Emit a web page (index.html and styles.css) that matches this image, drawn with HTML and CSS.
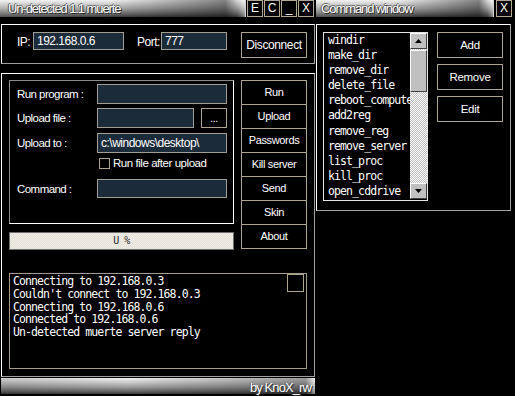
FILE: index.html
```html
<!DOCTYPE html>
<html>
<head>
<meta charset="utf-8">
<title>Un-detected 1.1 muerte</title>
<link rel="stylesheet" href="styles.css">
</head>
<body>
<div class="desk">
  <div class="win main">
    <div class="titlerow">
      <div class="titlebar main-title"><span class="ttext">Un-detected 1.1 muerte</span></div>
      <div class="tbtn">E</div>
      <div class="tbtn">C</div>
      <div class="tbtn">_</div>
      <div class="tbtn">X</div>
    </div>

    <div class="panel conn">
      <span class="lbl ip-lbl">IP:</span>
      <div class="field ip-field">192.168.0.6</div>
      <span class="lbl port-lbl">Port:</span>
      <div class="field port-field">777</div>
      <div class="btn disc">Disconnect</div>
    </div>

    <div class="panel body">
      <div class="top">
        <div class="leftcol">
          <div class="form">
            <div class="row r1">
              <span class="flabel">Run program :</span>
              <div class="field wide"></div>
            </div>
            <div class="row r2">
              <span class="flabel">Upload file :</span>
              <div class="field short"></div>
              <div class="btn dots">...</div>
            </div>
            <div class="row r3">
              <span class="flabel">Upload to :</span>
              <div class="field wide">c:\windows\desktop\</div>
            </div>
            <div class="row chkrow">
              <span class="chk"></span>
              <span class="chklabel">Run file after upload</span>
            </div>
            <div class="row r5">
              <span class="flabel">Command :</span>
              <div class="field wide cmdfield"></div>
            </div>
          </div>
          <div class="progress">U %</div>
        </div>
        <div class="actions">
          <div class="abtn">Run</div>
          <div class="abtn">Upload</div>
          <div class="abtn">Passwords</div>
          <div class="abtn">Kill server</div>
          <div class="abtn">Send</div>
          <div class="abtn">Skin</div>
          <div class="abtn">About</div>
        </div>
      </div>
      <div class="log">
        <div class="logline">Connecting to 192.168.0.3</div>
        <div class="logline">Couldn't connect to 192.168.0.3</div>
        <div class="logline">Connecting to 192.168.0.6</div>
        <div class="logline">Connected to 192.168.0.6</div>
        <div class="logline">Un-detected muerte server reply</div>
        <div class="logbox"></div>
      </div>
    </div>

    <div class="footer"><span class="ftext">by KnoX_rw</span></div>
  </div>

  <div class="win cmd">
    <div class="titlerow">
      <div class="titlebar cmd-title"><span class="ttext">Command window</span></div>
      <div class="tbtn cmdx">X</div>
    </div>
    <div class="panel cmdpanel">
      <div class="listbox">
        <div class="items">
          <div class="item">windir</div>
          <div class="item">make_dir</div>
          <div class="item">remove_dir</div>
          <div class="item">delete_file</div>
          <div class="item">reboot_computer</div>
          <div class="item">add2reg</div>
          <div class="item">remove_reg</div>
          <div class="item">remove_server</div>
          <div class="item">list_proc</div>
          <div class="item">kill_proc</div>
          <div class="item">open_cddrive</div>
        </div>
        <div class="scrollbar">
          <div class="sbtn up"><svg width="7" height="4" viewBox="0 0 7 4"><polygon points="3.5,0 7,4 0,4" fill="#000"/></svg></div>
          <div class="track"><div class="thumb"></div></div>
          <div class="sbtn down"><svg width="7" height="4" viewBox="0 0 7 4"><polygon points="0,0 7,0 3.5,4" fill="#000"/></svg></div>
        </div>
      </div>
      <div class="cmdbtns">
        <div class="btn cbtn">Add</div>
        <div class="btn cbtn">Remove</div>
        <div class="btn cbtn">Edit</div>
      </div>
    </div>
  </div>
</div>
</body>
</html>
```

FILE: styles.css
```css
* { box-sizing: border-box; }

html, body {
  margin: 0;
  padding: 0;
  background: #000;
}

body {
  width: 515px;
  height: 396px;
  overflow: hidden;
  font-family: "Liberation Sans", Arial, sans-serif;
  color: #fff;
}

.desk {
  display: flex;
  align-items: flex-start;
  gap: 1px;
}

.win.main { width: 315px; }
.win.cmd { width: 196px; }

/* title rows */
.titlerow {
  display: flex;
  gap: 1px;
  height: 17px;
}

.titlebar {
  height: 17px;
  position: relative;
  background:
    linear-gradient(to right, rgba(255,255,255,0.10) 0%, rgba(0,0,0,0) 45%, rgba(0,0,0,0.45) 92%, rgba(0,0,0,0.1) 97%, rgba(255,255,255,0.35) 100%),
    linear-gradient(to bottom, #f2f2f2 0%, #d4d4d4 20%, #a8a8a8 50%, #6c6c6c 80%, #3c3c3c 100%);
  border-right: 1px solid #d0d0d0;
}

.main-title { width: 246px; }
.cmd-title { width: 178px; }

.ttext {
  display: block;
  font-size: 13px;
  letter-spacing: -1.1px;
  line-height: 17px;
  padding-left: 8px;
  color: #fff;
  text-shadow: 1px 1px 0 #2a2a2a, -1px 0 0 #555, 0 -1px 0 #666;
  white-space: nowrap;
}

.cmd-title .ttext { padding-left: 5px; }

.tbtn {
  width: 16px;
  height: 17px;
  border: 1px solid #b0a890;
  background: #000;
  font-size: 12px;
  line-height: 15px;
  text-align: center;
  color: #fff;
}

.cmdx { margin-left: 1px; }

/* bevelled panels */
.panel {
  border-top: 1px solid #fff;
  border-left: 1px solid #fff;
  border-right: 1px solid #a0a0a0;
  border-bottom: 1px solid #a0a0a0;
}

.conn {
  margin: 7px 0 0 1px;
  width: 314px;
  height: 40px;
  display: flex;
  align-items: flex-start;
  padding: 7px 0 0 15px;
}

.lbl {
  font-size: 12px;
  letter-spacing: -0.5px;
  line-height: 20px;
}

.ip-lbl { width: 16px; }
.port-lbl { width: 24px; margin-left: 13px; }

.field {
  background: #1c2b39;
  border: 1px solid #a29e94;
  font-size: 12px;
  letter-spacing: -0.5px;
  color: #fff;
  white-space: nowrap;
  overflow: hidden;
  padding-left: 3px;
}

.ip-field { width: 91px; height: 18px; line-height: 16px; }
.port-field { width: 66px; height: 18px; line-height: 16px; }

.btn {
  border: 1px solid #aca48e;
  background: #000;
  color: #fff;
  text-align: center;
  font-size: 11px;
  letter-spacing: -0.3px;
}

.disc {
  width: 66px;
  height: 26px;
  line-height: 24px;
  font-size: 12px;
  letter-spacing: -0.4px;
  margin-left: 14px;
}

/* main body */
.body {
  margin: 9px 0 0 1px;
  width: 314px;
  height: 304px;
  padding: 6px 0 0 7px;
}

.top {
  display: flex;
  align-items: flex-start;
  gap: 7px;
}

.leftcol { width: 225px; }

.form {
  width: 225px;
  height: 144px;
  border-top: 1px solid #8a8a8a;
  border-left: 1px solid #8a8a8a;
  border-right: 1px solid #fff;
  border-bottom: 1px solid #fff;
  padding: 3px 0 0 7px;
}

.row {
  display: flex;
  align-items: center;
}

.r2 { margin-top: 4px; }
.r3 { margin-top: 5px; }
.chkrow { margin-top: 5px; padding-left: 82px; height: 11px; }
.r5 { margin-top: 10px; }

.flabel {
  width: 80px;
  font-size: 11.5px;
  letter-spacing: -0.55px;
  white-space: nowrap;
}

.wide { width: 130px; height: 20px; line-height: 18px; }
.short { width: 97px; height: 20px; }
.cmdfield { height: 19px; }

.dots {
  width: 26px;
  height: 20px;
  margin-left: 7px;
  line-height: 20px;
  font-size: 10px;
}

.chk {
  width: 11px;
  height: 11px;
  border: 1px solid #aca48e;
  background: #000;
}

.chklabel {
  margin-left: 3px;
  font-size: 11.5px;
  letter-spacing: -0.45px;
  line-height: 11px;
  white-space: nowrap;
}

.progress {
  margin-top: 8px;
  width: 225px;
  height: 18px;
  background-color: #ece9e1;
  background-image: conic-gradient(#efece5 25%, #e6e2da 0 50%, #efece5 0 75%, #e6e2da 0);
  background-size: 2px 2px;
  border: 1px solid #6e6e6e;
  color: #222;
  text-align: center;
  font-family: "DejaVu Sans Mono", monospace;
  font-size: 10px;
  letter-spacing: -0.5px;
  line-height: 16px;
}

.actions {
  width: 66px;
  display: flex;
  flex-direction: column;
}

.abtn {
  height: 25px;
  border: 1px solid #aca48e;
  margin-top: -1px;
  text-align: center;
  font-size: 11px;
  letter-spacing: -0.35px;
  line-height: 23px;
}

.abtn:first-child { margin-top: 0; }

.log {
  position: relative;
  margin-top: 23px;
  width: 298px;
  height: 96px;
  border: 1px solid #a49c88;
  padding: 1px 3px 0;
  font-family: "DejaVu Sans Mono", "Liberation Mono", monospace;
  font-size: 11.5px;
  letter-spacing: -0.9px;
  line-height: 12.8px;
}

.logline { white-space: nowrap; }

.logbox {
  position: absolute;
  top: 0;
  right: 2px;
  width: 17px;
  height: 18px;
  border: 1px solid #aca48e;
}

.footer {
  margin: 1px 0 0 1px;
  width: 314px;
  height: 16px;
  background:
    linear-gradient(to right, rgba(0,0,0,0.15) 0%, rgba(0,0,0,0) 40%, rgba(0,0,0,0.35) 97%, rgba(255,255,255,0.4) 100%),
    linear-gradient(to bottom, #f2f2f2 0%, #d0d0d0 25%, #a0a0a0 55%, #6a6a6a 82%, #3a3a3a 100%);
  text-align: right;
  padding-right: 4px;
}

.ftext {
  font-size: 13px;
  letter-spacing: -0.9px;
  line-height: 16px;
  color: #fff;
  text-shadow: 1px 1px 0 #2a2a2a, -1px 0 0 #555;
}

/* command window */
.cmdpanel {
  margin-top: 7px;
  width: 195px;
  height: 187px;
  padding: 7px 0 0 6px;
  display: flex;
  align-items: flex-start;
}

.listbox {
  width: 105px;
  height: 169px;
  border: 1px solid #e4e4e4;
  display: flex;
  background: #000;
}

.items {
  width: 86px;
  overflow: hidden;
  padding: 0 0 0 4px;
  font-family: "DejaVu Sans Mono", "Liberation Mono", monospace;
  font-size: 11.5px;
  letter-spacing: -0.9px;
  line-height: 15.1px;
}

.item { white-space: nowrap; }

.scrollbar {
  width: 17px;
  display: flex;
  flex-direction: column;
}

.sbtn {
  height: 16px;
  background: #c0c0c0;
  border-top: 1px solid #fff;
  border-left: 1px solid #fff;
  border-right: 1px solid #404040;
  border-bottom: 1px solid #404040;
  display: flex;
  align-items: center;
  justify-content: center;
}

.sbtn.down { margin-bottom: 1px; }

.track {
  flex: 1;
  background-image: conic-gradient(#fff 25%, #c0c0c0 0 50%, #fff 0 75%, #c0c0c0 0);
  background-size: 2px 2px;
  padding-top: 1px;
}

.thumb {
  height: 42px;
  background: #c0c0c0;
  border-top: 1px solid #fff;
  border-left: 1px solid #fff;
  border-right: 1px solid #404040;
  border-bottom: 1px solid #404040;
}

.cmdbtns {
  margin-left: 9px;
  display: flex;
  flex-direction: column;
  gap: 6px;
}

.cbtn {
  width: 66px;
  height: 26px;
  line-height: 24px;
  font-size: 11.5px;
  letter-spacing: -0.3px;
}
```
